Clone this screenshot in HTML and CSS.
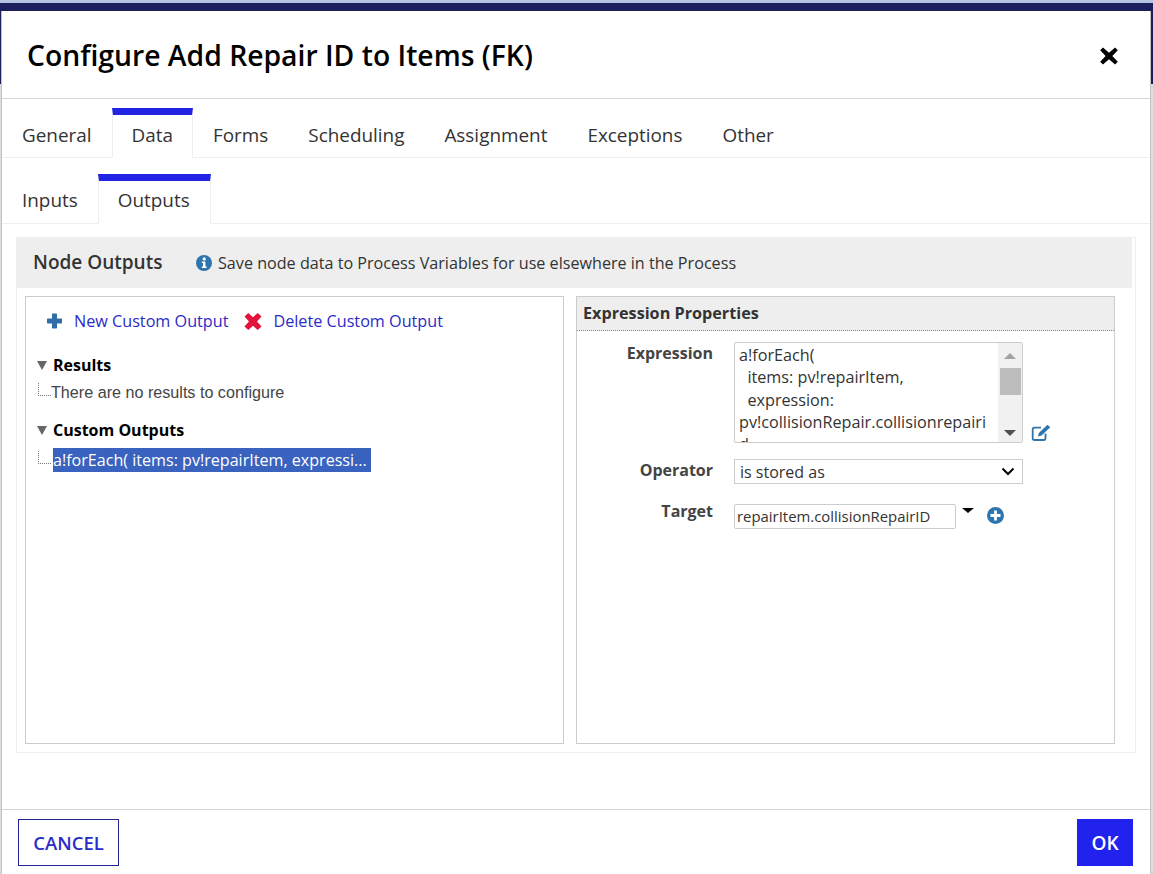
FILE: index.html
```html
<!DOCTYPE html>
<html lang="en">
<head>
<meta charset="utf-8">
<title>Configure Add Repair ID to Items (FK)</title>
<link rel="stylesheet" href="styles.css">
</head>
<body>
<div class="strip-light"></div>
<div class="strip-dark"></div>
<div class="modal">
  <header class="modal-head">
    <h1 class="modal-title">Configure Add Repair ID to Items (FK)</h1>
    <svg class="close-icon" viewBox="0 0 16 16" width="18" height="18"><path d="M2.6 0.4 8 5.2 13.4 0.4 15.8 2.8 11 8 15.8 13.2 13.4 15.6 8 10.8 2.6 15.6 0.2 13.2 5 8 0.2 2.8Z" fill="#000"/></svg>
  </header>
  <nav class="tabs tabs-main">
    <span class="tab">General</span>
    <span class="tab tab-active">Data</span>
    <span class="tab">Forms</span>
    <span class="tab">Scheduling</span>
    <span class="tab">Assignment</span>
    <span class="tab">Exceptions</span>
    <span class="tab">Other</span>
  </nav>
  <nav class="tabs tabs-sub">
    <span class="tab">Inputs</span>
    <span class="tab tab-active">Outputs</span>
  </nav>
  <main class="modal-body">
    <section class="outputs">
      <div class="outputs-head">
        <h2 class="outputs-title">Node Outputs</h2>
        <svg class="info-icon" viewBox="0 0 16 16" width="16" height="16"><circle cx="8" cy="8" r="8" fill="#2f75ad"/><circle cx="8.2" cy="3.9" r="1.6" fill="#fff"/><path d="M5.8 6.6H9.4V11.6H10.6V13H5.8V11.6H7V8H5.8Z" fill="#fff"/></svg>
        <span class="outputs-note">Save node data to Process Variables for use elsewhere in the Process</span>
      </div>
      <div class="panels">
        <div class="panel panel-tree">
          <div class="actions">
            <svg class="action-icon" viewBox="0 0 16 16" width="17" height="16"><path d="M6.200 0.500Q5.500 0.500 5.500 1.200V5.500H1.200Q0.500 5.500 0.500 6.200V9.800Q0.500 10.500 1.200 10.500H5.500V14.800Q5.500 15.500 6.200 15.500H9.800Q10.500 15.500 10.500 14.800V10.500H14.800Q15.500 10.500 15.500 9.800V6.200Q15.500 5.500 14.800 5.500H10.500V1.200Q10.500 0.500 9.800 0.500Z" fill="#2f6ca8"/></svg>
            <a class="action-link">New Custom Output</a>
            <svg class="action-icon action-icon-del" viewBox="0 0 16 16" width="18" height="17"><path d="M3.600 0 8 4 12.400 0 16 3.400 11.800 8 16 12.600 12.400 16 8 12 3.600 16 0 12.600 4.200 8 0 3.400Z" fill="#e2133c"/></svg>
            <a class="action-link">Delete Custom Output</a>
          </div>
          <div class="tree-group tree-group-first">
            <div class="tree-head"><span class="tree-arrow"></span>Results</div>
            <div class="tree-leaf tree-leaf-empty"><span class="tree-branch"></span><span class="tree-empty">There are no results to configure</span></div>
          </div>
          <div class="tree-group">
            <div class="tree-head"><span class="tree-arrow"></span>Custom Outputs</div>
            <div class="tree-leaf tree-leaf-sel"><span class="tree-branch tree-branch-sel"></span><span class="tree-selected">a!forEach( items: pv!repairItem, expressi...</span></div>
          </div>
        </div>
        <div class="panel panel-props">
          <div class="props-head">Expression Properties</div>
          <div class="form">
            <div class="form-row form-row-expr">
              <label class="form-label">Expression</label>
              <div class="expr-box">
                <div class="expr-text">a!forEach(
  items: pv!repairItem,
  expression:
pv!collisionRepair.collisionrepairid</div>
                <div class="scrollbar">
                  <span class="sb-up"></span>
                  <span class="sb-thumb"></span>
                  <span class="sb-space"></span>
                  <span class="sb-down"></span>
                </div>
              </div>
              <svg class="edit-icon" viewBox="0 0 20 18" width="20" height="18"><path d="M14.5 9.5V14.5A1.8 1.8 0 0 1 12.700 16H3.500A1.800 1.800 0 0 1 1.700 14.200V5.500A1.800 1.800 0 0 1 3.500 3.700H10" fill="none" stroke="#2f75ad" stroke-width="1.800"/><path d="M16.500 0.800 19.300 3.300 10.500 11.500 7 12.500 7.800 9Z" fill="#2f75ad"/></svg>
            </div>
            <div class="form-row form-row-op">
              <label class="form-label">Operator</label>
              <div class="select-box">
                <span>is stored as</span>
                <svg class="chevron" viewBox="0 0 14 9" width="14" height="9"><path d="M1.500 1.500 7 7 12.500 1.500" fill="none" stroke="#000" stroke-width="2"/></svg>
              </div>
            </div>
            <div class="form-row form-row-target">
              <label class="form-label form-label-target">Target</label>
              <div class="target-box">repairItem.collisionRepairID</div>
              <span class="target-caret"></span>
              <svg class="add-icon" viewBox="0 0 16 16" width="17" height="17"><circle cx="8" cy="8" r="8" fill="#2f75ad"/><path d="M6.700 3.300H9.300V6.700H12.700V9.300H9.300V12.700H6.700V9.300H3.300V6.700H6.700Z" fill="#fff"/></svg>
            </div>
          </div>
        </div>
      </div>
    </section>
  </main>
  <footer class="modal-foot">
    <button class="btn btn-cancel" type="button">CANCEL</button>
    <button class="btn btn-ok" type="button">OK</button>
  </footer>
</div>
</body>
</html>
```
FILE: styles.css
```css
* { box-sizing: border-box; }
html, body { margin: 0; padding: 0; }
body {
  width: 1153px;
  height: 874px;
  overflow: hidden;
  background: linear-gradient(#1b1f5c 84px, #dcdcdc 84px);
  font-family: "Open Sans", sans-serif;
  color: #333;
  display: flex;
  flex-direction: column;
}
.strip-light { height: 3px; background: #b3c3e0; flex: none; }
.strip-dark { height: 8px; background: #1b1f5c; flex: none; }
.modal {
  flex: 1;
  margin: 0 2px 0 1px;
  border-left: 1px solid #c4c4c4;
  border-right: 1px solid #c4c4c4;
  background: #fff;
  display: flex;
  flex-direction: column;
  min-height: 0;
}
.modal-head {
  height: 88px;
  flex: none;
  border-bottom: 1px solid #d6d6d6;
  display: flex;
  align-items: center;
  justify-content: space-between;
  padding: 0 32px 0 25px;
}
.modal-title {
  margin: 0;
  font-size: 28.300px;
  font-weight: 600;
  color: #000;
}
.close-icon { display: block; margin-top: 2px; }
.tabs {
  display: flex;
  flex: none;
  font-size: 18.900px;
  color: #333;
  border-bottom: 1px solid #eee;
}
.tabs-main { height: 59px; padding: 9px 0 0 0; }
.tabs-sub { height: 66px; padding: 16px 0 0 0; }
.tab {
  padding: 0 19px;
  border: 1px solid transparent;
  border-top: 7px solid transparent;
  display: flex;
  align-items: center;
  margin-bottom: -1px;
  line-height: 26px;
}
.tab-active {
  background: #fff;
  border-top-color: #2323e5;
  border-left-color: #eee;
  border-right-color: #eee;
  border-bottom-color: #fff;
}
.tabs-main .tab { padding-bottom: 3px; }
.tabs-sub .tab { padding-bottom: 4px; }
.tabs-sub .tab-active { padding-left: 19px; padding-right: 20px; }
.modal-body {
  flex: 1;
  min-height: 0;
  padding: 13px 14px 0 14px;
}
.outputs {
  height: 516px;
  border: 1px solid #eee;
  padding: 0 3px 0 0;
}
.outputs-head {
  height: 50px;
  background: #eee;
  display: flex;
  align-items: center;
  padding: 0 0 2px 16px;
}
.outputs-title {
  margin: 0;
  font-size: 19px;
  font-weight: 600;
  color: #333;
  width: 163px;
  flex: none;
}
.info-icon { flex: none; margin-top: 2px; }
.outputs-note { font-size: 16.150px; margin: 2px 0 0 6px; color: #333; }
.panels {
  display: flex;
  gap: 12px;
  padding: 8px 0 0 8px;
}
.panel {
  height: 448px;
  border: 1px solid #ccc;
  background: #fff;
}
.panel-tree { width: 539px; }
.panel-props { width: 539px; }
.actions {
  display: flex;
  align-items: center;
  padding: 10px 0 0 20px;
  height: 38px;
  font-size: 16.200px;
}
.action-icon { flex: none; }
.action-icon-del { margin-left: 16px; }
.action-link { color: #2b2bc8; margin-left: 11px; }
.tree-group-first { margin-top: 19px; }
.tree-group { margin-bottom: 15px; padding-left: 11px; }
.tree-head {
  font-size: 16px;
  font-weight: 700;
  color: #000;
  line-height: 22px;
  display: flex;
  align-items: center;
}
.tree-arrow {
  width: 0;
  height: 0;
  border-left: 5px solid transparent;
  border-right: 5px solid transparent;
  border-top: 9px solid #666;
  margin-right: 6px;
}
.tree-leaf {
  display: flex;
  align-items: center;
  height: 24px;
}
.tree-leaf-empty { margin-top: 4px; }
.tree-leaf-sel { margin-top: 7px; }
.tree-branch {
  width: 13px;
  height: 13px;
  margin: -5px 0 0 1px;
  border-left: 1px dotted #777;
  border-bottom: 1px dotted #777;
  flex: none;
}
.tree-branch-sel { margin-right: 2px; }
.tree-empty {
  font-family: "Liberation Sans", Arial, sans-serif;
  font-size: 16.150px;
  color: #444;
}
.tree-selected {
  background: #3a62bf;
  color: #fff;
  font-size: 16.100px;
  line-height: 24px;
  height: 24px;
  width: 318px;
  white-space: nowrap;
  overflow: hidden;
}
.props-head {
  height: 34px;
  background: #eee;
  border-bottom: 1px dotted #888;
  font-size: 16.200px;
  font-weight: 700;
  line-height: 33px;
  color: #333;
  padding-left: 6px;
}
.form { padding-top: 11px; }
.form-row { display: flex; align-items: flex-start; }
.form-row-op { margin-top: 16px; }
.form-row-target { margin-top: 20px; }
.form-label {
  width: 136px;
  flex: none;
  text-align: right;
  font-size: 16px;
  font-weight: 700;
  color: #444;
  line-height: 22px;
  margin-right: 21px;
}
.form-label-target { margin-top: -4px; }
.expr-box {
  width: 289px;
  height: 101px;
  border: 1px solid #ccc;
  border-radius: 2px;
  display: flex;
  overflow: hidden;
  font-size: 16.200px;
  color: #333;
}
.expr-text {
  flex: 1;
  min-width: 0;
  padding: 1px 7px 0 4px;
  line-height: 22.300px;
  white-space: pre-wrap;
  overflow-wrap: anywhere;
}
.scrollbar {
  width: 24px;
  flex: none;
  background: #f1f1f1;
  display: flex;
  flex-direction: column;
  align-items: center;
  padding: 10px 2px 6px;
}
.sb-up {
  width: 0; height: 0;
  border-left: 6px solid transparent;
  border-right: 6px solid transparent;
  border-bottom: 6px solid #a3a3a3;
}
.sb-thumb { width: 21px; height: 27px; background: #bcbcbc; margin-top: 9px; }
.sb-space { flex: 1; }
.sb-down {
  width: 0; height: 0;
  border-left: 6px solid transparent;
  border-right: 6px solid transparent;
  border-top: 6px solid #505050;
}
.edit-icon { margin: 82px 0 0 8px; flex: none; }
.select-box {
  width: 289px;
  height: 25px;
  border: 1px solid #ccc;
  display: flex;
  align-items: center;
  justify-content: space-between;
  padding: 0 7px 0 5px;
  font-size: 16px;
  color: #333;
}
.target-box {
  width: 222px;
  height: 25px;
  border: 1px solid #ccc;
  border-radius: 2px;
  padding-left: 2px;
  font-size: 14.900px;
  line-height: 23px;
  color: #333;
}
.target-caret {
  width: 0; height: 0;
  border-left: 6px solid transparent;
  border-right: 6px solid transparent;
  border-top: 5px solid #000;
  margin: 4px 0 0 6px;
}
.add-icon { margin: 3px 0 0 13px; flex: none; }
.modal-foot {
  height: 65px;
  flex: none;
  border-top: 1px solid #d6d6d6;
  display: flex;
  justify-content: space-between;
  padding: 9px 17px 0 16px;
}
.btn {
  height: 47px;
  font-family: "Open Sans", sans-serif;
  font-size: 19px;
  font-weight: 600;
  cursor: pointer;
}
.btn-cancel {
  width: 101px;
  background: #fff;
  color: #2b2bc8;
  border: 1px solid #232396;
  font-size: 18.500px;
}
.btn-ok {
  width: 56px;
  background: #2222ee;
  color: #fff;
  border: 0;
}
```
